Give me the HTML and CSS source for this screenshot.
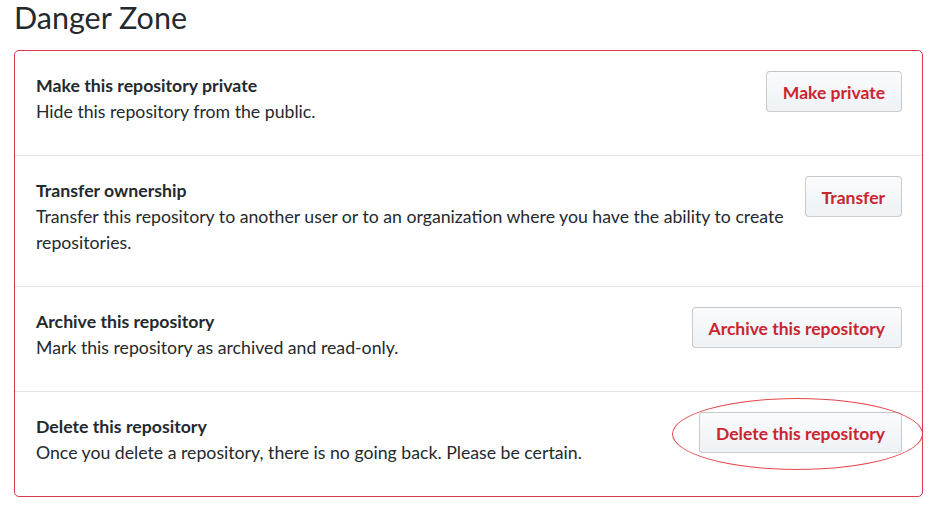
FILE: index.html
```html
<!DOCTYPE html>
<html lang="en">
<head>
<meta charset="utf-8">
<title>Danger Zone</title>
<link rel="stylesheet" href="styles.css">
</head>
<body>
<div class="page">
  <h2 class="subhead">Danger Zone</h2>
  <div class="danger-box">
    <div class="row">
      <div class="info">
        <strong class="title">Make this repository private</strong>
        <p class="desc">Hide this repository from the public.</p>
      </div>
      <button class="btn">Make private</button>
    </div>
    <div class="row">
      <div class="info">
        <strong class="title">Transfer ownership</strong>
        <p class="desc">Transfer this repository to another user or to an organization where you have the ability to create repositories.</p>
      </div>
      <button class="btn">Transfer</button>
    </div>
    <div class="row">
      <div class="info">
        <strong class="title">Archive this repository</strong>
        <p class="desc">Mark this repository as archived and read-only.</p>
      </div>
      <button class="btn">Archive this repository</button>
    </div>
    <div class="row">
      <div class="info">
        <strong class="title">Delete this repository</strong>
        <p class="desc">Once you delete a repository, there is no going back. Please be certain.</p>
      </div>
      <span class="btn-wrap">
        <button class="btn">Delete this repository</button>
        <span class="circle"></span>
      </span>
    </div>
  </div>
</div>
</body>
</html>
```

FILE: styles.css
```css
* { box-sizing: border-box; }

body {
  margin: 0;
  background: #fff;
  color: #24292e;
  font-family: "Lato", "Liberation Sans", sans-serif;
}

.page {
  padding-left: 14px;
  width: 923px;
}

.subhead {
  margin: 0;
  font-size: 30.5px;
  font-weight: 400;
  line-height: 34px;
  color: #24292e;
}

.danger-box {
  margin-top: 16px;
  border: 1px solid #d73a49;
  border-radius: 5px;
}

.row {
  display: flex;
  align-items: flex-start;
  gap: 20px;
  padding: 20px 20px 32px 21px;
  border-top: 1px solid #e1e4e8;
}

.row:first-child { border-top: 0; }

.info {
  flex: 1;
  margin-top: 2px;
  margin-bottom: -2px;
  font-size: 17.7px;
  line-height: 26px;
}

.title {
  display: block;
  font-weight: 700;
}

.desc {
  margin: 0;
}

.btn {
  flex: none;
  height: 41px;
  padding: 2px 16px 0;
  font-family: inherit;
  font-size: 17.5px;
  font-weight: 700;
  line-height: 26px;
  color: #cb2431;
  background-color: #fafbfc;
  background-image: linear-gradient(-180deg, #fafbfc 0%, #eff3f6 90%);
  border: 1px solid rgba(27, 31, 35, 0.2);
  border-radius: 4px;
}

.btn-wrap {
  position: relative;
  display: block;
  flex: none;
}

.btn-wrap .btn { display: block; }

.circle {
  position: absolute;
  left: -27px;
  top: -14px;
  width: 251px;
  height: 72px;
  border: 1px solid #e6484d;
  border-radius: 50%;
  pointer-events: none;
}
```
